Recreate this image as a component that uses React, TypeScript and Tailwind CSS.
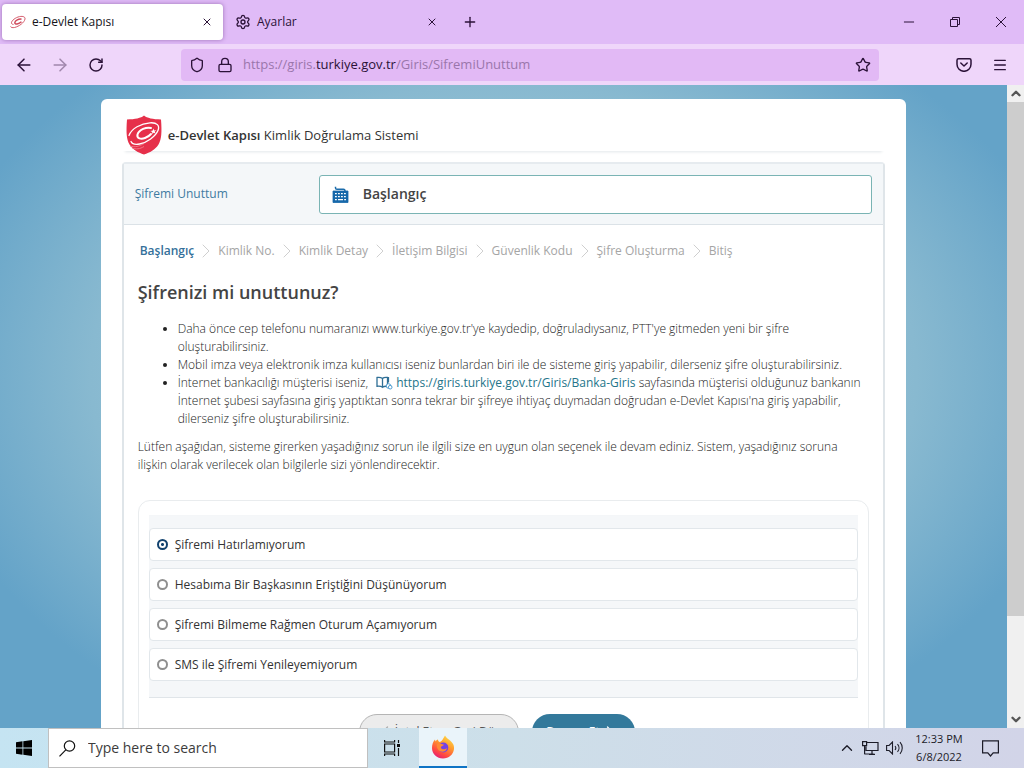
import { useState, type ReactNode } from "react"
import {
  ArrowLeft,
  ArrowRight,
  ChevronDown,
  ChevronLeft,
  ChevronRight,
  ChevronUp,
  Lock,
  Menu,
  Minus,
  Plus,
  RotateCw,
  Settings,
  Shield,
  Star,
  X,
} from "lucide-react"

const steps = [
  "Başlangıç",
  "Kimlik No.",
  "Kimlik Detay",
  "İletişim Bilgisi",
  "Güvenlik Kodu",
  "Şifre Oluşturma",
  "Bitiş",
]

const options = [
  "Şifremi Hatırlamıyorum",
  "Hesabıma Bir Başkasının Eriştiğini Düşünüyorum",
  "Şifremi Bilmeme Rağmen Oturum Açamıyorum",
  "SMS ile Şifremi Yenileyemiyorum",
]

function IconButton({ label, className = "", children }: { label: string; className?: string; children: ReactNode }) {
  return (
    <button type="button" aria-label={label} className={`flex h-8 shrink-0 items-center justify-center ${className}`}>
      {children}
    </button>
  )
}

function SwirlIcon() {
  return (
    <svg viewBox="0 0 16 14" className="h-[14px] w-4" fill="none" stroke="#cf4a5b">
      <path d="M3.500 9.500C-1 9 2.500 4 8 2c4-1.300 7.500-.5 7 2-.6 3.500-6 7.500-10.500 8.500-2 .4-3.500 0-4-1" strokeWidth=".9" />
      <path d="M11.500 4.200C9 3.500 5 5.500 4.800 7.800c0 2 4 1.500 6.700-1" strokeWidth="1.500" />
    </svg>
  )
}

function ShieldLogo() {
  return (
    <svg viewBox="0 0 36 40" className="h-10 w-9 shrink-0">
      <path d="M18 .5C21 3.200 27 4.200 35 4.500c1 13 .5 20-2.500 25C29 35 24 37.500 18 39.500 12 37.500 7 35 3.500 29.500.500 24.500 0 17.500 1 4.500 9 4.200 15 3.200 18 .5z" fill="#e6304a" />
      <path d="M4 31c5 1.500 9 .5 14-2.500M6 33c4 1.500 8 1 12-1.500" fill="none" stroke="#f28492" strokeWidth=".8" />
      <g fill="none" stroke="#fff" strokeLinecap="round">
        <path d="M3 20.500C5.500 13.500 15 8.500 24 7.800c7-.5 10 2.700 8 7.700-2.500 6-11 12-18.500 13.500-4.500.8-7.500-.2-8.500-2.500" strokeWidth="1.300" />
        <path d="M25 13c-4.500-1.300-12 1.700-13.500 6.500-1 4 3.500 5 7.500 3.500 2.700-1 4.500-2.200 6-4" strokeWidth="2" />
      </g>
      <path d="M27.500 13.500l.6 2 2.200-.4-1.600 1.500.9 1.900-2-.8-1.500 1.300.1-2-1.800-.9 2.100-.4z" fill="#fff" />
    </svg>
  )
}

function KeyboardIcon() {
  return (
    <svg viewBox="0 0 17 17" className="h-[17px] w-[17px] shrink-0">
      <path d="M3.500 .800v1.200c0 1 .6 1.300 1.500 1.300h6.500c1 0 1.500.4 1.500 2" fill="none" stroke="#1c6cab" strokeWidth="1.500" />
      <path d="M1 5h15v11.500H1z" fill="#1768aa" stroke="#1768aa" strokeWidth=".8" strokeLinejoin="round" />
      <path d="M3 7.700h11M3 10.700h11" stroke="#fff" strokeWidth="1.300" strokeDasharray="1.800 1.200" />
      <path d="M3 13.700h1.800M6 13.700h5M12.200 13.700H14" stroke="#fff" strokeWidth="1.300" />
    </svg>
  )
}

function BookIcon() {
  return (
    <svg viewBox="0 0 17 14" className="mx-[3px] inline-block h-[14px] w-[17px] align-[-3px]" fill="none" stroke="#2f6f96" strokeWidth="1.300">
      <path d="M6.500 2.500C5 1.300 3 1.300 1 1.500v8.800c2-.2 4-.2 5.500 1 1.500-1.200 3-1.200 5-1V1.500c-2-.2-3.800-.2-5 1zM6.500 2.500v8.500" />
      <path d="M11.500 1.500h1v5" strokeWidth="1.200" />
      <circle cx="12.500" cy="10" r="2.300" fill="#fff" stroke="#4c9bd0" strokeWidth="1" />
      <circle cx="14.200" cy="11.200" r="1.800" fill="#fff" stroke="#4c9bd0" strokeWidth="1" />
    </svg>
  )
}

function FirefoxIcon() {
  return (
    <svg viewBox="0 0 24 24" className="h-6 w-6">
      <defs>
        <linearGradient id="flame" x1=".8" y1="0" x2=".25" y2="1">
          <stop offset="0" stopColor="#ffe14a" />
          <stop offset=".4" stopColor="#ff9a2e" />
          <stop offset=".75" stopColor="#ff4a42" />
          <stop offset="1" stopColor="#e31b78" />
        </linearGradient>
      </defs>
      <path d="M14 .5c1 2 2.500 3 4.500 4.500 3 2.500 5 5 4.500 9-.6 5.500-5.200 9.500-11 9.500C6 23.500 1 19 1 13c0-3.500 1-6.500 3-8.500l.5 2c.6-1 1.500-1.800 2.500-2 0 1 .5 2 1.500 2.500 2-.5 3-2 5.500-6.500z" fill="url(#flame)" />
      <circle cx="12.300" cy="12.500" r="5" fill="#7542e5" />
      <path d="M6 9c3-1.500 5 .2 7 .6-.5 1.700-3 1.400-3.200 2.800.2 2 4 2.600 6.200.6-.5 4-6.500 5-9 1.500C6 13 5.500 11 6 9z" fill="#ff8a35" />
    </svg>
  )
}

function BrowserTabs() {
  return (
    <div className="flex h-11 shrink-0 items-center bg-[#e0bbf7] pl-0.5 text-xs text-[#2b1238]">
      <div className="flex h-9 w-[221px] items-center rounded bg-white pl-2 shadow-[0_0_4px_rgba(90,40,120,0.5)]">
        <SwirlIcon />
        <span className="ml-1.5 flex-1 text-[#15141a]">e-Devlet Kapısı</span>
        <IconButton label="Sekmeyi kapat" className="w-8">
          <X className="h-3 w-3" strokeWidth={2} />
        </IconButton>
      </div>
      <div className="flex h-9 w-[225px] items-center pl-3">
        <Settings className="h-4 w-4" strokeWidth={2} />
        <span className="ml-1.5 flex-1">Ayarlar</span>
        <IconButton label="Sekmeyi kapat" className="w-8">
          <X className="h-3 w-3" strokeWidth={2} />
        </IconButton>
      </div>
      <IconButton label="Yeni sekme" className="w-11">
        <Plus className="h-4 w-4" strokeWidth={2} />
      </IconButton>
      <div className="ml-auto flex">
        <IconButton label="Küçült" className="w-[46px]">
          <Minus className="h-4 w-4" strokeWidth={1.5} />
        </IconButton>
        <IconButton label="Geri yükle" className="w-[46px]">
          <svg viewBox="0 0 10 10" className="h-[10px] w-[10px]" fill="none" stroke="currentColor">
            <path d="M.5 2.500h7v7h-7zM2.500 2.500v-2h7v7h-2" />
          </svg>
        </IconButton>
        <IconButton label="Kapat" className="w-[46px]">
          <svg viewBox="0 0 10 10" className="h-[10px] w-[10px]" stroke="currentColor">
            <path d="M0 0l10 10M10 0L0 10" />
          </svg>
        </IconButton>
      </div>
    </div>
  )
}

function AddressBar() {
  return (
    <div className="flex h-[41px] shrink-0 items-center bg-[#efd6fa] text-[#2b1238]">
      <IconButton label="Geri" className="ml-2 w-8">
        <ArrowLeft className="h-5 w-5" strokeWidth={1.8} />
      </IconButton>
      <IconButton label="İleri" className="ml-1 w-8">
        <ArrowRight className="h-5 w-5 opacity-40" strokeWidth={1.8} />
      </IconButton>
      <IconButton label="Yenile" className="ml-1 w-8">
        <RotateCw className="h-4 w-4" strokeWidth={2.2} />
      </IconButton>
      <div className="ml-[69px] mr-[67px] flex h-8 flex-1 items-center rounded bg-[#e2b9f5] px-2">
        <Shield className="h-4 w-4" strokeWidth={2} />
        <Lock className="ml-3 h-4 w-4" strokeWidth={2} />
        <span className="ml-2.5 flex-1 text-[13px] text-[#9a76ab]">
          https://giris.<span className="text-[#2b1238]">turkiye.gov.tr</span>/Giris/SifremiUnuttum
        </span>
        <Star className="h-4 w-4" strokeWidth={2} />
      </div>
      <IconButton label="Pocket'e kaydet" className="w-9">
        <svg viewBox="0 0 16 14" className="h-[14px] w-4" fill="none" stroke="currentColor" strokeWidth="1.500" strokeLinecap="round" strokeLinejoin="round">
          <path d="M2.500.800h11c.9 0 1.500.6 1.500 1.500v4a7 7 0 0 1-14 0v-4C1 1.400 1.600.800 2.500.800z" />
          <path d="M4.800 5L8 8l3.200-3" />
        </svg>
      </IconButton>
      <IconButton label="Menü" className="mr-1.5 w-9">
        <Menu className="h-4 w-4" strokeWidth={2} />
      </IconButton>
    </div>
  )
}

function Instructions() {
  return (
    <div className="text-xs font-light leading-[18px] text-[#222]">
      <ul className="list-disc pl-10">
        <li>
          Daha önce cep telefonu numaranızı www.turkiye.gov.tr'ye kaydedip, doğruladıysanız, PTT'ye gitmeden yeni bir şifre
          <br />
          oluşturabilirsiniz.
        </li>
        <li>
          Mobil imza veya elektronik imza kullanıcısı iseniz bunlardan biri ile de sisteme giriş yapabilir, dilerseniz şifre oluşturabilirsiniz.
        </li>
        <li>
          İnternet bankacılığı müşterisi iseniz,{" "}
          <a href="#banka-giris" className="ml-0.5 font-normal text-[#24758a]">
            <BookIcon />
            https://giris.turkiye.gov.tr/Giris/Banka-Giris
          </a>{" "}
          sayfasında müşterisi olduğunuz bankanın
          <br />
          İnternet şubesi sayfasına giriş yaptıktan sonra tekrar bir şifreye ihtiyaç duymadan doğrudan e-Devlet Kapısı'na giriş yapabilir,
          <br />
          dilerseniz şifre oluşturabilirsiniz.
        </li>
      </ul>
      <p className="mt-2.5">
        Lütfen aşağıdan, sisteme girerken yaşadığınız sorun ile ilgili size en uygun olan seçenek ile devam ediniz. Sistem, yaşadığınız soruna
        <br />
        ilişkin olarak verilecek olan bilgilerle sizi yönlendirecektir.
      </p>
    </div>
  )
}

function ResetForm() {
  const [selected, setSelected] = useState(0)

  return (
    <form className="mt-[26px] rounded-t-xl border border-[#e9ecee] px-2.5 pb-6 pt-3.5">
      <fieldset aria-label="Sorununuzu seçiniz" className="border-y border-b-[#e0e5e9] border-t-[#f4f6f8] bg-[#f5f7f9] pb-4 pt-3">
        <div className="flex flex-col gap-[7px]">
          {options.map((option, i) => (
            <label key={option} className="flex h-[33px] items-center rounded-sm border border-[#e2e7eb] bg-white pl-[7px] text-xs text-[#333]">
              <input
                type="radio"
                name="sorun"
                checked={selected === i}
                onChange={() => setSelected(i)}
                className="mr-[7px] h-[11px] w-[11px] appearance-none rounded-full border-2 border-[#8f8f8f] bg-white checked:border-[#12426e] checked:bg-[radial-gradient(circle,#12426e_1px,white_2px)]"
              />
              {option}
            </label>
          ))}
        </div>
      </fieldset>
      <div className="mt-4 flex justify-center gap-[13px] pr-3.5">
        <button type="button" className="flex h-9 w-40 items-center justify-center rounded-full border border-[#b5b5b5] bg-[#ececec] text-xs text-[#555]">
          <ChevronLeft className="h-5 w-5 text-[#aaa]" strokeWidth={1.5} />
          İptal Et ve Geri Dön
        </button>
        <button type="submit" className="flex h-9 w-[103px] items-center justify-center rounded-full bg-[#33799b] text-xs text-white">
          Devam Et
          <ChevronRight className="h-5 w-5" strokeWidth={1.5} />
        </button>
      </div>
    </form>
  )
}

function Page() {
  return (
    <main className="min-w-0 flex-1 overflow-hidden bg-[#68a6ca] bg-[radial-gradient(ellipse_at_50%_45%,#b5d8e2_0%,#88b9d0_58%,#64a3c8_82%)] pt-3.5">
      <div className="mx-auto w-4/5 rounded-t-md bg-white px-[21px] pt-4">
        <header className="flex h-9 items-start pl-1 shadow-[0_4px_3px_-3px_#e3e7ea]">
          <ShieldLogo />
          <h1 className="ml-1.5 text-[13px] leading-10 text-[#333]">
            <strong className="font-semibold">e-Devlet Kapısı</strong> Kimlik Doğrulama Sistemi
          </h1>
        </header>
        <section className="mt-[11px] rounded-t border-2 border-[#dfe5e9] border-t-[#e6ebef]">
          <div className="flex h-[61px] items-center border-b border-[#dbe2e7] bg-[#f4f7f9] px-[11px]">
            <h2 className="w-[184px] text-xs text-[#3f7ba1]">Şifremi Unuttum</h2>
            <div className="flex h-[39px] flex-1 items-center rounded-[3px] border border-[#7ab4b4] bg-white pl-3">
              <KeyboardIcon />
              <span className="ml-3.5 text-sm font-semibold text-[#444]">Başlangıç</span>
            </div>
          </div>
          <div className="px-3.5 pt-[17px]">
            <ol className="flex items-center pl-0.5 text-xs leading-[18px] text-[#a5a5a5]">
              {steps.map((step, i) => (
                <li key={step} className={i === 0 ? "flex h-[18px] items-center font-semibold text-[#34709a]" : "flex h-[18px] items-center"}>
                  {i > 0 && <ChevronRight className="h-6 w-6 text-[#cfcfcf]" strokeWidth={1} />}
                  {step}
                </li>
              ))}
            </ol>
            <h3 className="mb-4 mt-5 text-lg font-semibold leading-6 text-[#444]">Şifrenizi mi unuttunuz?</h3>
            <Instructions />
            <ResetForm />
          </div>
        </section>
      </div>
    </main>
  )
}

function Scrollbar() {
  return (
    <div className="flex w-[17px] shrink-0 flex-col items-center bg-[#f0f0f0] text-[#555]">
      <ChevronUp className="h-[17px] w-3.5 shrink-0" strokeWidth={4} />
      <div className="h-[514px] w-full bg-[#cdcdcd]" />
      <ChevronDown className="mt-auto h-[17px] w-3.5 shrink-0" strokeWidth={4} />
    </div>
  )
}

function Taskbar() {
  return (
    <footer className="flex h-10 shrink-0 items-center bg-linear-to-r from-[#c5e4f2] via-[#cddfe9] to-[#d2d4e8] text-[#111]">
      <IconButton label="Start" className="w-12">
        <svg viewBox="0 0 16 16" className="h-4 w-4">
          <path d="M0 2.200L6.500 1.300v6.300H0zM7.300 1.200L16 0v7.600H7.300zM0 8.400h6.500v6.300L0 13.800zM7.300 8.400H16V16l-8.700-1.200z" />
        </svg>
      </IconButton>
      <label className="flex h-10 w-80 items-center border border-[#c0c0c0] bg-white pl-2.5">
        <svg viewBox="0 0 17 17" className="h-[17px] w-[17px] shrink-0" fill="none" stroke="currentColor" strokeWidth="1.200">
          <circle cx="10.500" cy="6" r="5.200" />
          <path d="M6.800 9.800L.500 16.300" />
        </svg>
        <input type="text" aria-label="Search" placeholder="Type here to search" className="ml-3 min-w-0 flex-1 text-sm outline-none placeholder:text-[#3c3c3c]" />
      </label>
      <IconButton label="Task View" className="w-[51px] pr-1">
        <svg viewBox="0 0 16 16" className="h-4 w-4" fill="none" stroke="currentColor" strokeWidth="1.200">
          <path d="M.600 4h10v8H.600zM.600 0v2h10V0M.600 16v-2h10v2M14.500 0v3M14.500 8v8" />
          <path d="M13 4h3v3h-3z" fill="currentColor" stroke="none" />
        </svg>
      </IconButton>
      <button type="button" aria-label="Firefox" className="flex h-10 w-12 items-center justify-center border-b-2 border-[#0f74c5] bg-[#eaf4fa]">
        <FirefoxIcon />
      </button>
      <div className="ml-auto flex items-center text-[#1c1c28]">
        <ChevronUp className="mr-1.5 h-[18px] w-[18px]" strokeWidth={1.8} />
        <svg viewBox="0 0 17 14" className="h-[14px] w-[17px]" fill="none" stroke="currentColor" strokeWidth="1.200">
          <path d="M5 1.500h11v8H4v-4M.600.600h4v4h-4zM2.600 4.600v8.700M2.600 13h9M10 9.500V13M7 13.300h6" />
        </svg>
        <svg viewBox="0 0 18 14" className="ml-[7px] h-[14px] w-[18px]" fill="none" stroke="currentColor" strokeWidth="1.100">
          <path d="M.600 4.500h2.500L6.500 1v12L3.100 9.500H.600zM9 5c1 1.200 1 2.800 0 4M11.500 3.200c2 2.200 2 5.400 0 7.600M14 1.200c3 3.400 3 8.200 0 11.600" />
        </svg>
        <div className="ml-2 w-[54px] text-center text-[11px] leading-[18px]">
          <div className="whitespace-nowrap">12:33 PM</div>
          <div className="whitespace-nowrap">6/8/2022</div>
        </div>
        <svg viewBox="0 0 17 17" className="ml-4 mr-[25px] h-[17px] w-[17px]" fill="none" stroke="currentColor" strokeWidth="1.200">
          <path d="M.600.800h15.800v12h-5.200L8.500 16l-2.700-3.200H.600z" />
        </svg>
      </div>
    </footer>
  )
}

export default function App() {
  return (
    <div className="flex h-screen flex-col overflow-hidden font-['Open_Sans',sans-serif]">
      <BrowserTabs />
      <AddressBar />
      <div className="flex min-h-0 flex-1">
        <Page />
        <Scrollbar />
      </div>
      <Taskbar />
    </div>
  )
}
